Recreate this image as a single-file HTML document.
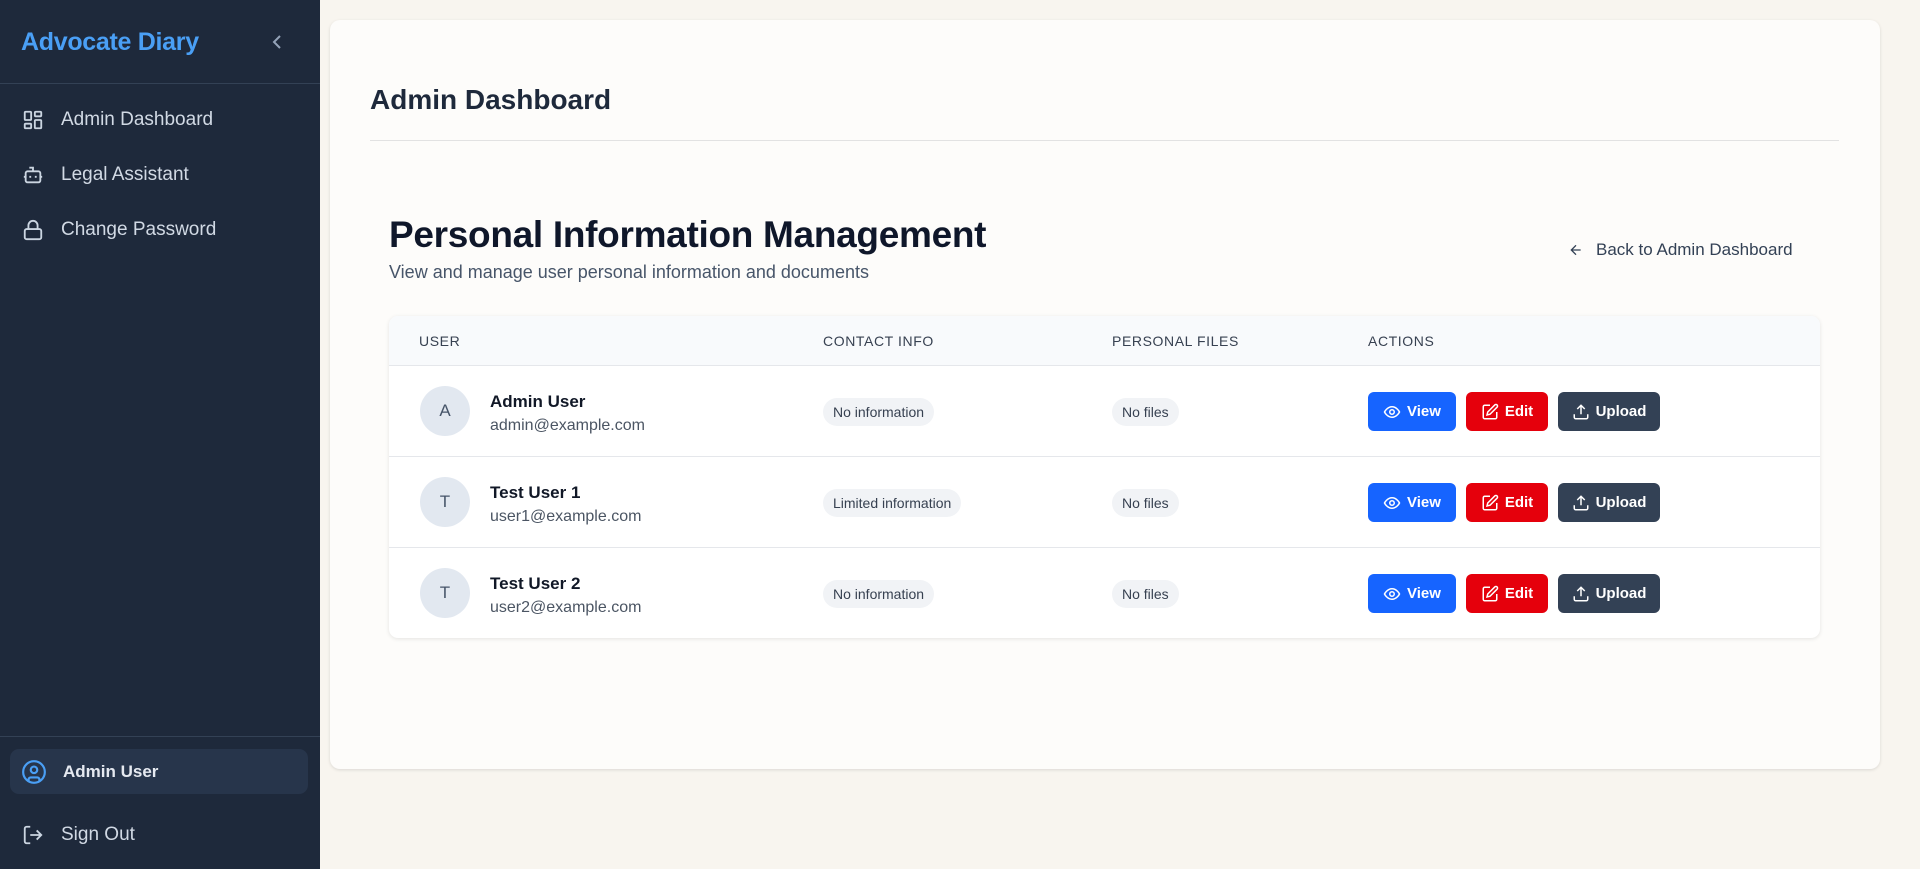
<!DOCTYPE html>
<html><head><meta charset="utf-8"><style>
*{box-sizing:border-box;margin:0;padding:0}
body{width:1920px;height:869px;background:#f8f5ef;font-family:"Liberation Sans",sans-serif;position:relative;overflow:hidden}
.sb{position:absolute;left:0;top:0;width:320px;height:869px;background:#1e293b;color:#cbd5e1}
.logo{position:absolute;left:21px;top:28px;font-size:25px;font-weight:bold;color:#4a9ff5;letter-spacing:-0.3px}
.chev{position:absolute;left:270px;top:30px}
.div{position:absolute;left:0;width:320px;height:1px;background:#334155}
.mi{position:absolute;left:22px;display:flex;align-items:center;font-size:19px;color:#d1d9e4}
.mi svg{margin-right:17px}
.ub{position:absolute;left:10px;top:748px;width:298px;height:45px;background:#27354b;border-radius:9px;display:flex;align-items:center;padding-left:11px;font-weight:bold;font-size:17px;color:#e5e9f0}
.ub svg{margin-right:16px}
.card{position:absolute;left:330px;top:20px;width:1550px;height:749px;background:#fdfcfa;border-radius:10px;box-shadow:0 1px 3px rgba(0,0,0,.12)}
h1{position:absolute;left:370px;top:84px;font-size:28px;color:#1e293b}
.hr{position:absolute;left:370px;top:140px;width:1469px;height:1px;background:#e2e2e2}
h2{position:absolute;left:389px;top:214px;font-size:37px;color:#0f172a;letter-spacing:-0.3px}
.sub{position:absolute;left:389px;top:262px;font-size:18px;color:#475569}
.back{position:absolute;left:1568px;top:240px;font-size:17px;color:#334155;display:flex;align-items:center}
.back svg{margin-right:12px}
.tbl{position:absolute;left:389px;top:316px;width:1431px;height:322px;background:#fff;border-radius:9px;box-shadow:0 1px 4px rgba(0,0,0,.1);overflow:hidden}
.th{height:50px;background:#f8fafc;border-bottom:1px solid #e5e7eb;position:relative;font-size:14px;color:#374151;letter-spacing:.6px}
.th span,.row .c{position:absolute}
.th span{top:17px}
.row{height:91px;position:relative;border-bottom:1px solid #e5e7eb}
.row:last-child{border:none}
.av{position:absolute;left:31px;top:20px;width:50px;height:50px;border-radius:50%;background:#e2e8f0;color:#475569;font-size:17px;display:flex;align-items:center;justify-content:center}
.nm{position:absolute;left:101px;top:26px;font-size:17px;font-weight:bold;color:#111827}
.em{position:absolute;left:101px;top:51px;font-size:16px;color:#4b5563}
.pill{position:absolute;top:32px;height:28px;padding:0 10px;background:#f1f3f6;border-radius:14px;font-size:14px;color:#374151;line-height:28px}
.btn{position:absolute;top:26px;height:39px;border-radius:6px;color:#fff;font-weight:bold;font-size:15px;display:flex;align-items:center;justify-content:center}
.btn svg{margin-right:6px}
.v{left:979px;width:88px;background:#1664ff}
.e{left:1077px;width:82px;background:#e5000c}
.u{left:1169px;width:102px;background:#334155}
</style></head><body>
<div class="sb">
<div class="logo">Advocate Diary</div>
<svg class="chev" width="16" height="24" viewBox="0 0 16 24"><path d="M10 6 4 12l6 6" fill="none" stroke="#94a3b8" stroke-width="2"/></svg>
<div class="div" style="top:83px"></div>
<div class="mi" style="top:109px"><svg width="22" height="22" viewBox="0 0 24 24" fill="none" stroke="#cbd5e1" stroke-width="2"><rect x="3" y="3" width="7" height="9" rx="1"/><rect x="14" y="3" width="7" height="5" rx="1"/><rect x="14" y="12" width="7" height="9" rx="1"/><rect x="3" y="16" width="7" height="5" rx="1"/></svg>Admin Dashboard</div>
<div class="mi" style="top:164px"><svg width="22" height="22" viewBox="0 0 24 24" fill="none" stroke="#cbd5e1" stroke-width="2"><path d="M12 8V4H8"/><rect x="4" y="8" width="16" height="12" rx="2"/><path d="M2 14h2M20 14h2M15 13v2M9 13v2"/></svg>Legal Assistant</div>
<div class="mi" style="top:219px"><svg width="22" height="22" viewBox="0 0 24 24" fill="none" stroke="#cbd5e1" stroke-width="2"><rect x="3" y="11" width="18" height="11" rx="2"/><path d="M7 11V7a5 5 0 0 1 10 0v4"/></svg>Change Password</div>
<div class="div" style="top:736px"></div>
<div class="ub" style="top:749px"><svg width="26" height="26" viewBox="0 0 24 24" fill="none" stroke="#4a9ff5" stroke-width="2"><circle cx="12" cy="12" r="10"/><circle cx="12" cy="10" r="3"/><path d="M7 20.7v-1.7a2 2 0 0 1 2-2h6a2 2 0 0 1 2 2v1.7"/></svg>Admin User</div>
<div class="mi" style="top:824px"><svg width="22" height="22" viewBox="0 0 24 24" fill="none" stroke="#cbd5e1" stroke-width="2"><path d="M9 21H5a2 2 0 0 1-2-2V5a2 2 0 0 1 2-2h4M16 17l5-5-5-5M21 12H9"/></svg>Sign Out</div>
</div>
<div class="card"></div>
<h1>Admin Dashboard</h1>
<div class="hr"></div>
<h2>Personal Information Management</h2>
<div class="sub">View and manage user personal information and documents</div>
<div class="back"><svg width="16" height="16" viewBox="0 0 24 24" fill="none" stroke="#334155" stroke-width="2"><path d="M19 12H5M12 19l-7-7 7-7"/></svg>Back to Admin Dashboard</div>
<div class="tbl">
<div class="th"><span style="left:30px">USER</span><span style="left:434px">CONTACT INFO</span><span style="left:723px">PERSONAL FILES</span><span style="left:979px">ACTIONS</span></div>
<div class="row"><div class="av">A</div><div class="nm">Admin User</div><div class="em">admin@example.com</div><div class="pill" style="left:434px">No information</div><div class="pill" style="left:723px">No files</div>
<div class="btn v"><svg width="18" height="18" viewBox="0 0 24 24" fill="none" stroke="#fff" stroke-width="2"><path d="M2 12s3.5-7 10-7 10 7 10 7-3.5 7-10 7S2 12 2 12z"/><circle cx="12" cy="12" r="3"/></svg>View</div>
<div class="btn e"><svg width="18" height="18" viewBox="0 0 24 24" fill="none" stroke="#fff" stroke-width="2"><path d="M12 3H5a2 2 0 0 0-2 2v14a2 2 0 0 0 2 2h14a2 2 0 0 0 2-2v-7"/><path d="M18.4 2.6a2.1 2.1 0 0 1 3 3L12 15l-4 1 1-4z"/></svg>Edit</div>
<div class="btn u"><svg width="18" height="18" viewBox="0 0 24 24" fill="none" stroke="#fff" stroke-width="2"><path d="M21 15v4a2 2 0 0 1-2 2H5a2 2 0 0 1-2-2v-4M17 8l-5-5-5 5M12 3v12"/></svg>Upload</div></div>
<div class="row"><div class="av">T</div><div class="nm">Test User 1</div><div class="em">user1@example.com</div><div class="pill" style="left:434px">Limited information</div><div class="pill" style="left:723px">No files</div>
<div class="btn v"><svg width="18" height="18" viewBox="0 0 24 24" fill="none" stroke="#fff" stroke-width="2"><path d="M2 12s3.5-7 10-7 10 7 10 7-3.5 7-10 7S2 12 2 12z"/><circle cx="12" cy="12" r="3"/></svg>View</div>
<div class="btn e"><svg width="18" height="18" viewBox="0 0 24 24" fill="none" stroke="#fff" stroke-width="2"><path d="M12 3H5a2 2 0 0 0-2 2v14a2 2 0 0 0 2 2h14a2 2 0 0 0 2-2v-7"/><path d="M18.4 2.6a2.1 2.1 0 0 1 3 3L12 15l-4 1 1-4z"/></svg>Edit</div>
<div class="btn u"><svg width="18" height="18" viewBox="0 0 24 24" fill="none" stroke="#fff" stroke-width="2"><path d="M21 15v4a2 2 0 0 1-2 2H5a2 2 0 0 1-2-2v-4M17 8l-5-5-5 5M12 3v12"/></svg>Upload</div></div>
<div class="row"><div class="av">T</div><div class="nm">Test User 2</div><div class="em">user2@example.com</div><div class="pill" style="left:434px">No information</div><div class="pill" style="left:723px">No files</div>
<div class="btn v"><svg width="18" height="18" viewBox="0 0 24 24" fill="none" stroke="#fff" stroke-width="2"><path d="M2 12s3.5-7 10-7 10 7 10 7-3.5 7-10 7S2 12 2 12z"/><circle cx="12" cy="12" r="3"/></svg>View</div>
<div class="btn e"><svg width="18" height="18" viewBox="0 0 24 24" fill="none" stroke="#fff" stroke-width="2"><path d="M12 3H5a2 2 0 0 0-2 2v14a2 2 0 0 0 2 2h14a2 2 0 0 0 2-2v-7"/><path d="M18.4 2.6a2.1 2.1 0 0 1 3 3L12 15l-4 1 1-4z"/></svg>Edit</div>
<div class="btn u"><svg width="18" height="18" viewBox="0 0 24 24" fill="none" stroke="#fff" stroke-width="2"><path d="M21 15v4a2 2 0 0 1-2 2H5a2 2 0 0 1-2-2v-4M17 8l-5-5-5 5M12 3v12"/></svg>Upload</div></div>
</div>
</body></html>
